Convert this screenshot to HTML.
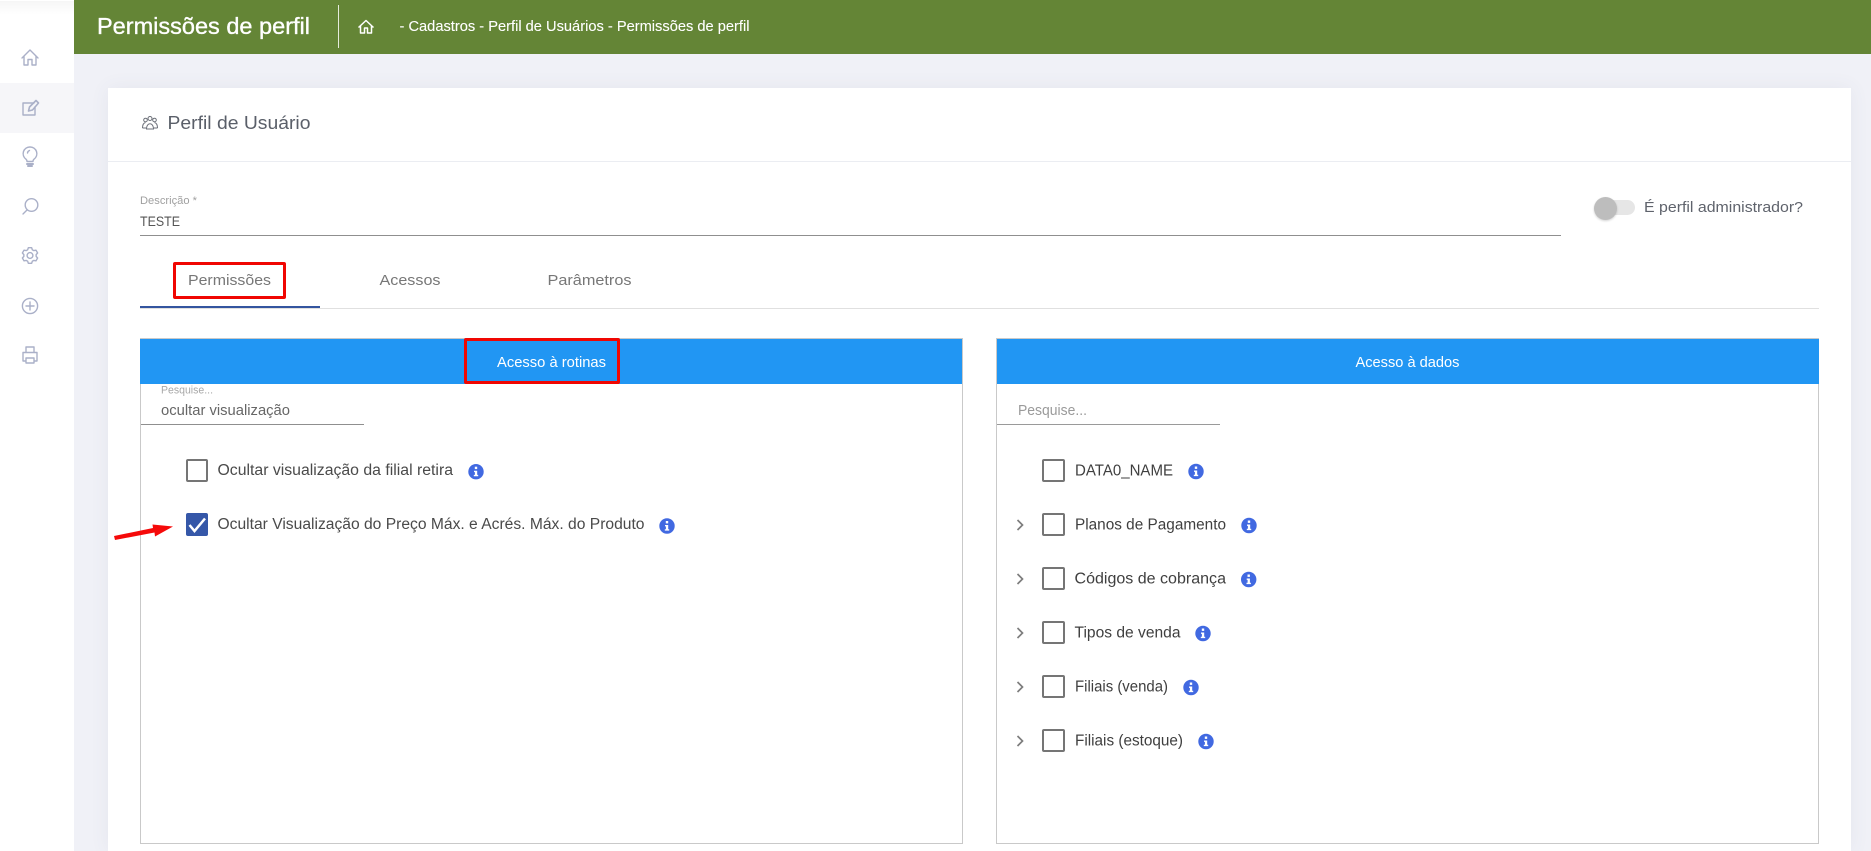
<!DOCTYPE html>
<html lang="pt-BR">
<head>
<meta charset="utf-8">
<title>Permissões de perfil</title>
<style>
html,body{margin:0;padding:0;width:1871px;height:851px;overflow:hidden;background:#f0f1f7;font-family:"Liberation Sans",sans-serif}
div{position:absolute;box-sizing:border-box}
svg{position:absolute;left:0;top:0}
text{font-family:"Liberation Sans",sans-serif}
</style>
</head>
<body>
<div style="left:0;top:0;width:74px;height:851px;background:#fff"></div>
<div style="left:0;top:1px;width:74px;height:14px;background:linear-gradient(#f6f6f6,#fff)"></div>
<div style="left:0;top:83px;width:74px;height:50px;background:#f6f6f9"></div>
<div style="left:74px;top:0;width:1797px;height:54px;background:#648536"></div>
<div style="left:338px;top:5px;width:1px;height:43px;background:#e6ecdc"></div>
<div style="left:108px;top:88px;width:1743px;height:763px;background:#fff;box-shadow:0 0 18px rgba(80,80,120,.07)"></div>
<div style="left:108px;top:161px;width:1743px;height:1px;background:#ebedf2"></div>
<div style="left:140px;top:235px;width:1421px;height:1px;background:#8f8f8f"></div>
<div style="left:140px;top:308px;width:1679px;height:1px;background:#e0e0e0"></div>
<div style="left:140px;top:306px;width:180px;height:2px;background:#34559f"></div>
<div style="left:140px;top:338px;width:823px;height:506px;border:1px solid #c9c9c9"></div>
<div style="left:140px;top:339px;width:822px;height:45px;background:#2196f3"></div>
<div style="left:996px;top:338px;width:823px;height:506px;border:1px solid #c9c9c9"></div>
<div style="left:997px;top:339px;width:822px;height:45px;background:#2196f3"></div>
<div style="left:173px;top:262px;width:113px;height:37px;border:3px solid #f00602;border-radius:2px"></div>
<div style="left:464px;top:338px;width:156px;height:46px;border:3px solid #f00602;border-radius:2px"></div>
<div style="left:141px;top:424px;width:223px;height:1px;background:#8f8f8f"></div>
<div style="left:997px;top:424px;width:223px;height:1px;background:#9a9a9a"></div>
<div style="left:1595px;top:200px;width:40px;height:15px;border-radius:8px;background:#e6e6e6"></div>
<div style="left:1594px;top:197px;width:23px;height:23px;border-radius:50%;background:#bdbdbd;box-shadow:0 1px 2px rgba(0,0,0,.18)"></div>
<div style="left:186px;top:459px;width:22px;height:23px;border:2px solid #757575;border-radius:2px;background:#fff"></div>
<div style="left:186px;top:513px;width:22px;height:23px;border-radius:2px;background:#3557a8"></div>
<div style="left:1042px;top:459px;width:23px;height:23px;border:2px solid #757575;border-radius:2px"></div>
<div style="left:1042px;top:513px;width:23px;height:23px;border:2px solid #757575;border-radius:2px"></div>
<div style="left:1042px;top:567px;width:23px;height:23px;border:2px solid #757575;border-radius:2px"></div>
<div style="left:1042px;top:621px;width:23px;height:23px;border:2px solid #757575;border-radius:2px"></div>
<div style="left:1042px;top:675px;width:23px;height:23px;border:2px solid #757575;border-radius:2px"></div>
<div style="left:1042px;top:729px;width:23px;height:23px;border:2px solid #757575;border-radius:2px"></div>

<svg width="1871" height="851" viewBox="0 0 1871 851" xmlns="http://www.w3.org/2000/svg">
<defs>
<g id="info"><circle r="7.7" fill="#4169e1"/><rect x="-1.2" y="-5" width="2.4" height="2.4" fill="#fff"/><path d="M-2-1H1.2V3.2H2.2V4.6H-2.2V3.2H-1.1V.4H-2Z" fill="#fff"/></g>
<path id="chev" d="M-2.5-5L2.5 0L-2.5 5" fill="none" stroke="#7d7d7d" stroke-width="1.7"/>
</defs>

<!-- sidebar icons -->
<g fill="none" stroke="#aab0c8" stroke-width="1.4" stroke-linejoin="round" stroke-linecap="round">
<path d="M22 58L30 50L38 58M24 56.5V65H28V59.5H32V65H36V56.5"/>
<path d="M34 103H23V115H35V107"/>
<path d="M28.500 111L29.500 107L36 100.500L38.500 103L32.500 110Z" stroke-width="1.600"/>
<path d="M30 147a6.7 6.7 0 0 1 4 12.2c-.8.7-1 1.6-1 2.3h-6c0-.7-.2-1.6-1-2.300a6.700 6.700 0 0 1 4-12.200Z"/>
<path d="M27 164H33M28 166H32" stroke-width="2"/>
<path d="M27.500 153a3 3 0 0 1 2-2.500"/>
<circle cx="31.500" cy="205" r="6.300"/>
<path d="M27 210L23 214"/>
<circle cx="30" cy="255.500" r="2.900"/>
<path transform="translate(30 255.500)" d="M-2.320-5.750L-1.660-7.830L1.660-7.830L2.320-5.750L3.820-4.890L5.950-5.350L7.610-2.470L6.140-.86L6.140.86L7.610 2.470L5.950 5.350L3.820 4.890L2.320 5.750L1.660 7.830L-1.660 7.830L-2.320 5.750L-3.820 4.890L-5.950 5.350L-7.610 2.470L-6.140.86L-6.140-.86L-7.610-2.470L-5.950-5.350L-3.820-4.890Z"/>
<circle cx="30" cy="306" r="7.600"/>
<path d="M30 302V310M26 306H34"/>
<path d="M26 352V347H34V352M26 361H23V352.500H37V361H34M26 358H34V363H26Z"/>
</g>

<!-- header -->
<text x="97" y="34" fill="#fff" stroke="#fff" stroke-width=".35" font-size="23.500" textLength="213" lengthAdjust="spacingAndGlyphs">Permissões de perfil</text>
<path d="M358.500 27.500L366 20.500L373.500 27.500M360.500 25.500V33H364.500V28H367.500V33H371.500V25.500" fill="none" stroke="#fff" stroke-width="1.500" stroke-linejoin="round"/>
<text x="399.500" y="31" fill="#fff" stroke="#fff" stroke-width=".1" font-size="14.500" textLength="350" lengthAdjust="spacingAndGlyphs">- Cadastros - Perfil de Usuários - Permissões de perfil</text>

<!-- card head -->
<g fill="none" stroke="#6b6f78" stroke-width="1">
<circle cx="145.500" cy="120" r="1.800"/><circle cx="150" cy="118.500" r="2"/><circle cx="154.500" cy="120" r="1.800"/>
<path d="M142.500 128c0-3 1-5 3-5.500M157.500 128c0-3-1-5-3-5.500M146.500 129c0-7 7-7 7 0ZM142.500 128h3.500M154 128h3.500"/>
</g>
<text x="167.500" y="129" fill="#5a5f69" font-size="18.500" textLength="143" lengthAdjust="spacingAndGlyphs">Perfil de Usuário</text>

<!-- description -->
<text x="140" y="204" fill="#a0a0a0" font-size="11" textLength="57" lengthAdjust="spacingAndGlyphs">Descrição *</text>
<text x="140" y="226" fill="#555" font-size="14" textLength="40" lengthAdjust="spacingAndGlyphs">TESTE</text>
<text x="1644" y="212" fill="#5f636c" font-size="15" textLength="159" lengthAdjust="spacingAndGlyphs">É perfil administrador?</text>

<!-- tabs -->
<text x="188" y="285" fill="#777" font-size="15" textLength="83" lengthAdjust="spacingAndGlyphs">Permissões</text>
<text x="379.500" y="285" fill="#777" font-size="15" textLength="61" lengthAdjust="spacingAndGlyphs">Acessos</text>
<text x="547.500" y="285" fill="#777" font-size="15" textLength="84" lengthAdjust="spacingAndGlyphs">Parâmetros</text>

<!-- panel headers -->
<text x="497" y="367" fill="#fff" font-size="14.500" textLength="109" lengthAdjust="spacingAndGlyphs">Acesso à rotinas</text>
<text x="1355.500" y="367" fill="#fff" font-size="14.500" textLength="104" lengthAdjust="spacingAndGlyphs">Acesso à dados</text>

<!-- left panel -->
<text x="161" y="393.500" fill="#a8a8a8" font-size="11" textLength="52" lengthAdjust="spacingAndGlyphs">Pesquise...</text>
<text x="161" y="415" fill="#666" font-size="15" textLength="129" lengthAdjust="spacingAndGlyphs">ocultar visualização</text>
<text x="217.500" y="475" fill="#4a4a4a" font-size="15.500" textLength="235.500" lengthAdjust="spacingAndGlyphs">Ocultar visualização da filial retira</text>
<use href="#info" x="476" y="471.700"/>
<path d="M189.500 525L194.500 531L205 518.500" fill="none" stroke="#fff" stroke-width="2.500"/>
<text x="217.500" y="529" fill="#4a4a4a" font-size="15.500" textLength="427" lengthAdjust="spacingAndGlyphs">Ocultar Visualização do Preço Máx. e Acrés. Máx. do Produto</text>
<use href="#info" x="667" y="526"/>
<path d="M114 536L153 528L152.500 524.500L173 526.500L155 536.500L154.500 532.500L115 540Z" fill="#f50a0a"/>

<!-- right panel -->
<text x="1018" y="415" fill="#9a9a9a" font-size="14.500" textLength="69" lengthAdjust="spacingAndGlyphs">Pesquise...</text>
<g fill="#3f3f3f" font-size="15.500">
<text x="1075" y="475.500" textLength="98" lengthAdjust="spacingAndGlyphs">DATA0_NAME</text>
<text x="1075" y="529.500" textLength="151" lengthAdjust="spacingAndGlyphs">Planos de Pagamento</text>
<text x="1074.500" y="583.500" textLength="151.500" lengthAdjust="spacingAndGlyphs">Códigos de cobrança</text>
<text x="1074.500" y="637.500" textLength="106" lengthAdjust="spacingAndGlyphs">Tipos de venda</text>
<text x="1075" y="691.500" textLength="93" lengthAdjust="spacingAndGlyphs">Filiais (venda)</text>
<text x="1075" y="745.500" textLength="108" lengthAdjust="spacingAndGlyphs">Filiais (estoque)</text>
</g>
<use href="#info" x="1196" y="471.500"/>
<use href="#info" x="1249" y="525.500"/>
<use href="#info" x="1248.700" y="579.500"/>
<use href="#info" x="1203" y="633.500"/>
<use href="#info" x="1191" y="687.500"/>
<use href="#info" x="1206" y="741.500"/>
<use href="#chev" x="1020" y="525"/>
<use href="#chev" x="1020" y="579"/>
<use href="#chev" x="1020" y="633"/>
<use href="#chev" x="1020" y="687"/>
<use href="#chev" x="1020" y="741"/>
</svg>
</body>
</html>
